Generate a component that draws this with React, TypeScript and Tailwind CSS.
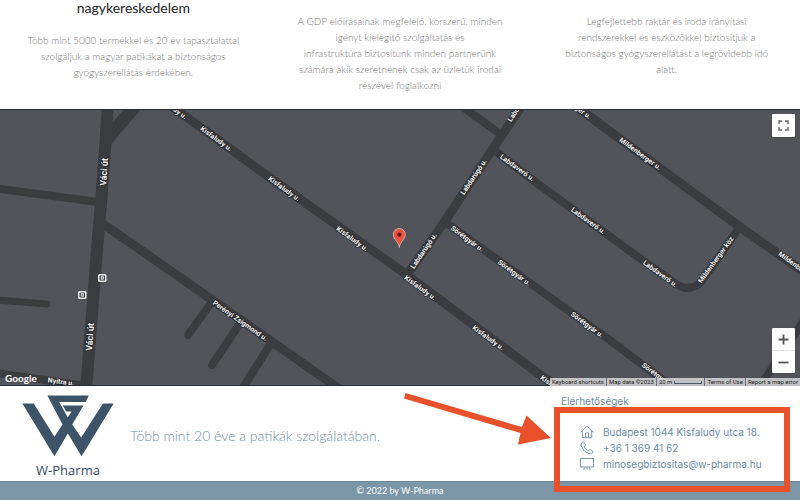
import { Fragment } from "react";

interface StreetLabel {
	name: string;
	x: number;
	y: number;
	angle: number;
	size?: number;
}

interface Service {
	title?: string;
	lines: string[];
}

const services: Service[] = [
	{
		title: "nagykereskedelem",
		lines: [
			"Több mint 5000 termékkel és 20 év tapasztalattal",
			"szolgáljuk a magyar patikákat a biztonságos",
			"gyógyszerellátás érdekében.",
		],
	},
	{
		lines: [
			"A GDP előírásainak megfelelő, korszerű, minden",
			"igényt kielégítő szolgáltatás és",
			"infrastruktúra biztosítunk minden partnerünk",
			"számára akik szeretnének csak az üzletük irodai",
			"részével foglalkozni",
		],
	},
	{
		lines: [
			"Legfejlettebb raktár és iroda irányítási",
			"rendszerekkel és eszközökkel biztosítjuk a",
			"biztonságos gyógyszerellátást a legrövidebb idő",
			"alatt.",
		],
	},
];

const roads = [
	{ d: "M108 105 L105 150 L101 203 L97 250 L86 390", width: 12 },
	{ d: "M107 139 L136 105", width: 13 },
	{ d: "M0 189 L98 202", width: 8 },
	{ d: "M103 224 L135 246 L341 390", width: 9 },
	{ d: "M211 303 L188 335", width: 8 },
	{ d: "M239 325 L212 365", width: 8 },
	{ d: "M270 345 L240 392", width: 8 },
	{ d: "M-4 300 L47 304", width: 7 },
	{ d: "M-4 373 L86 386", width: 8 },
	{ d: "M170 105 L269 177 L407 275 L535 371 L562 390", width: 9 },
	{ d: "M407 275 L445 221 L498 141 L523 104", width: 9 },
	{ d: "M460 105 L500 134", width: 8 },
	{ d: "M494 150 L530 178 L627 249 L672 281 Q688 295 702 281 L739 228", width: 8 },
	{ d: "M574 105 L740 227 L804 272", width: 9 },
	{ d: "M445 222 L530 283 L607 338 L676 390", width: 8 },
	{ d: "M756 392 L804 320", width: 8 },
];

const labels: StreetLabel[] = [
	{ name: "Kisfaludy u.", x: 171, y: 107, angle: 36 },
	{ name: "Kisfaludy u.", x: 216, y: 139, angle: 36 },
	{ name: "Kisfaludy u.", x: 284, y: 189, angle: 36 },
	{ name: "Kisfaludy u.", x: 352, y: 239, angle: 36 },
	{ name: "Kisfaludy u.", x: 420, y: 288, angle: 36 },
	{ name: "Kisfaludy u.", x: 488, y: 338, angle: 36 },
	{ name: "Kisfaludy u.", x: 556, y: 388, angle: 36 },
	{ name: "Labdarúgó u.", x: 521, y: 104, angle: -56 },
	{ name: "Labdarúgó u.", x: 474, y: 177, angle: -56 },
	{ name: "Labdarúgó u.", x: 424, y: 251, angle: -56 },
	{ name: "Labdaverő u.", x: 517, y: 168, angle: 36 },
	{ name: "Labdaverő u.", x: 588, y: 221, angle: 36 },
	{ name: "Labdaverő u.", x: 660, y: 274, angle: 36 },
	{ name: "Mildenberger u.", x: 570, y: 103, angle: 36 },
	{ name: "Mildenberger u.", x: 640, y: 154, angle: 36 },
	{ name: "Mildenberger u.", x: 799, y: 268, angle: 36 },
	{ name: "Mildenberger köz", x: 716, y: 260, angle: -54 },
	{ name: "Sörétgyár u.", x: 467, y: 239, angle: 36 },
	{ name: "Sörétgyár u.", x: 514, y: 273, angle: 36 },
	{ name: "Sörétgyár u.", x: 587, y: 325, angle: 36 },
	{ name: "Sörétgyár u.", x: 658, y: 376, angle: 36 },
	{ name: "Perényi Zsigmond u.", x: 240, y: 321, angle: 35 },
	{ name: "Nyitra u.", x: 61, y: 382, angle: 7 },
	{ name: "Váci út", x: 104, y: 172, angle: -86, size: 9 },
	{ name: "Váci út", x: 90, y: 337, angle: -86, size: 9 },
];

const busStops = [
	{ x: 102, y: 278 },
	{ x: 82, y: 295 },
];

function StreetMap() {
	return (
		<svg
			className="block h-full w-full"
			viewBox="0 109 800 277"
			preserveAspectRatio="xMidYMid slice"
			role="img"
			aria-label="Budapest, Kisfaludy utca"
		>
			<rect x="0" y="109" width="800" height="277" fill="#535459" />
			<g fill="none" stroke="#3b3c40" strokeLinejoin="round">
				{roads.map((road) => (
					<path
						key={road.d}
						d={road.d}
						strokeWidth={road.width}
						strokeLinecap="round"
					/>
				))}
			</g>
			<g
				className="font-['Roboto',sans-serif] font-bold"
				fill="#f4f4f4"
				stroke="#222326"
				strokeWidth="1.5"
				strokeLinejoin="round"
				paintOrder="stroke"
				textAnchor="middle"
				dominantBaseline="central"
			>
				{labels.map((label) => (
					<text
						key={`${label.name}-${label.x}`}
						fontSize={label.size ?? 7}
						transform={`translate(${label.x} ${label.y}) rotate(${label.angle})`}
					>
						{label.name}
					</text>
				))}
			</g>
			{busStops.map((stop) => (
				<g key={stop.x} transform={`translate(${stop.x} ${stop.y})`}>
					<rect x="-4" y="-4" width="8.5" height="8" rx="1.5" fill="#e8e8e8" />
					<rect x="-2.5" y="-2.5" width="5.5" height="5" rx="1" fill="#3b3c40" />
					<rect x="-1.2" y="-1.8" width="3" height="3.4" fill="#e8e8e8" />
					<rect x="-0.3" y="-0.6" width="1.2" height="1.2" fill="#3b3c40" />
				</g>
			))}
			<g>
				<path
					d="M399.300 247.500 C398.600 241.500 393.300 239.500 393.300 234.500 A6 6 0 0 1 405.300 234.500 C405.300 239.500 400 241.500 399.300 247.500Z"
					fill="#e8503f"
					stroke="#d7c3c0"
					strokeWidth="0.8"
				/>
				<circle cx="399.300" cy="234.700" r="2.100" fill="#6b1a14" />
			</g>
			<path d="M0 109.500 H800 M0 385.500 H800" stroke="#292b35" />
		</svg>
	);
}

function Logo() {
	return (
		<svg className="h-[62px] w-[92px]" viewBox="67 45 275 185" aria-hidden="true">
			<path
				fill="#3d5468"
				d="M68 70 H102 L164 170 L188 133 L143 46 H267 L257 66 H178 L204 112 L215 94 H199 L189 76 H251 L217 133 L244 172 L309 70 H341 L245 228 L204 160 L164 228 Z"
			/>
		</svg>
	);
}

function HouseIcon() {
	return (
		<svg className="h-[14px] w-[14px]" viewBox="0 0 14 14" fill="none" stroke="#6d8ba0" strokeWidth="0.9">
			<path d="M0.700 7.300 L7 1.300 L13.300 7.300 M2.300 6 V12.700 H11.700 V6 M5.500 12.500 V8 H8.500 V12.500" />
		</svg>
	);
}

function PhoneIcon() {
	return (
		<svg className="h-[14px] w-[14px]" viewBox="0 0 14 14" fill="none" stroke="#6d8ba0" strokeWidth="0.9">
			<path d="M2.700 1.200 C1.200 2 0.700 3.500 1.400 5.200 C2.900 8.700 5.500 11.300 9 12.700 C10.700 13.300 12.300 12.600 12.900 11 C13.100 10.500 12.900 10.200 12.500 9.900 L10.300 8.700 C9.900 8.500 9.500 8.600 9.200 8.900 L8.400 9.800 C6.500 9 5 7.500 4.200 5.700 L5.100 4.900 C5.400 4.600 5.500 4.200 5.300 3.800 L4.100 1.600 C3.800 1.100 3.300 0.900 2.700 1.200Z" />
		</svg>
	);
}

function ScreenIcon() {
	return (
		<svg className="h-[14px] w-[14px]" viewBox="0 0 14 14" fill="none" stroke="#6d8ba0" strokeWidth="0.9">
			<path d="M0.500 1.500 H13.500 V10 H0.500Z M4.500 10.500 L3.800 13 M9.500 10.500 L10.200 13 M7 10.500 V12.500" />
		</svg>
	);
}

export default function App() {
	return (
		<div className="bg-white font-['Inter',sans-serif]">
			<section className="grid grid-cols-3 pb-4 text-center">
				{services.map((service) => (
					<article key={service.lines[0]}>
						{service.title && (
							<h2 className="mb-[3px] font-['Lato',sans-serif] text-[14px] leading-4 text-[#222]">
								{service.title}
							</h2>
						)}
						<p className="pt-[13px] font-['Lato',sans-serif] text-[10px] font-light leading-4 whitespace-nowrap text-[#777]">
							{service.lines.map((line, i) => (
								<Fragment key={line}>
									{i > 0 && <br />}
									{line}
								</Fragment>
							))}
						</p>
					</article>
				))}
			</section>

			<section className="relative h-[277px] overflow-hidden font-['Roboto',sans-serif]">
				<StreetMap />
				<span className="absolute bottom-0 left-[5px] font-['Lato',sans-serif] text-[10px] leading-4 font-bold text-white">
					Google
				</span>
				<button
					type="button"
					aria-label="Toggle fullscreen view"
					className="absolute top-[5px] right-[5px] flex size-[23px] items-center justify-center rounded-[1px] bg-white shadow"
				>
					<svg className="size-[11px]" viewBox="0 0 11 11" fill="none" stroke="#666" strokeWidth="1.4">
						<path d="M1 4 V1 H4 M7 1 H10 V4 M10 7 V10 H7 M4 10 H1 V7" />
					</svg>
				</button>
				<div className="absolute right-[5px] bottom-[13px] w-[23px] divide-y divide-gray-200 rounded-[1px] bg-white shadow">
					<button type="button" aria-label="Zoom in" className="flex h-[23px] w-full items-center justify-center">
						<svg className="size-[11px]" viewBox="0 0 11 11" stroke="#555" strokeWidth="1.8">
							<path d="M0.500 5.500 H10.500 M5.500 0.500 V10.500" />
						</svg>
					</button>
					<button type="button" aria-label="Zoom out" className="flex h-[22px] w-full items-center justify-center">
						<svg className="size-[11px]" viewBox="0 0 11 11" stroke="#555" strokeWidth="1.8">
							<path d="M0.500 5.500 H10.500" />
						</svg>
					</button>
				</div>
				<div className="absolute right-0 bottom-0 flex divide-x divide-gray-500 bg-[#d6d6d8]/85 text-[6px] leading-2 whitespace-nowrap text-[#222]">
					<button type="button" className="px-[2px]">Keyboard shortcuts</button>
					<span className="px-[2px]">Map data ©2023</span>
					<span className="flex items-center gap-[2px] px-[2px]">
						20 m
						<i className="h-[3px] w-[28px] border border-t-0 border-gray-600" />
					</span>
					<a href="#terms" className="px-[2px]">Terms of Use</a>
					<a href="#report" className="px-[2px]">Report a map error</a>
				</div>
			</section>

			<footer>
				<div className="flex h-[95px]">
					<div className="ml-[22px] flex w-[92px] flex-col items-center pt-[9px]">
						<Logo />
						<span className="mt-[5px] font-['Open_Sans',sans-serif] text-[13px] leading-4 text-[#34495e]">
							W-Pharma
						</span>
					</div>
					<p className="flex-1 pt-10 pl-4 font-['Lato',sans-serif] text-[14px] leading-5 font-light text-[#7591a6]">
						Több mint 20 éve a patikák szolgálatában.
					</p>
					<address className="relative w-[239px] pt-[7px] text-[10px] leading-4 text-[#6d8ba0] not-italic">
						<h3>Elérhetőségek</h3>
						<ul className="mt-[15px] ml-[19px]">
							<li className="flex items-center gap-[9px]">
								<HouseIcon />
								Budapest 1044 Kisfaludy utca 18.
							</li>
							<li className="flex items-center gap-[9px]">
								<PhoneIcon />
								<a href="tel:+3613694162">+36 1 369 41 62</a>
							</li>
							<li className="flex items-center gap-[9px]">
								<ScreenIcon />
								<a href="mailto:minosegbiztositas@w-pharma.hu">minosegbiztositas@w-pharma.hu</a>
							</li>
						</ul>
						<div className="absolute top-[21px] right-[10px] -left-[7px] h-[85px] border-6 border-[#e9512d]" />
						<svg
							className="absolute top-[6px] right-full mr-[9px] h-[54px] w-[148px]"
							viewBox="404 392 148 54"
							aria-hidden="true"
						>
							<path
								fill="#e9512d"
								d="M405.500 393 L522 427 L526.500 415.500 L551 438 L518 444.500 L520.500 433 L404 398.500Z"
							/>
						</svg>
					</address>
				</div>
				<p className="border-t border-[#6d8796] bg-[#7a96a7] text-center font-['Lato',sans-serif] text-[9px] leading-[18px] text-white">
					© 2022 by W-Pharma
				</p>
			</footer>
		</div>
	);
}
